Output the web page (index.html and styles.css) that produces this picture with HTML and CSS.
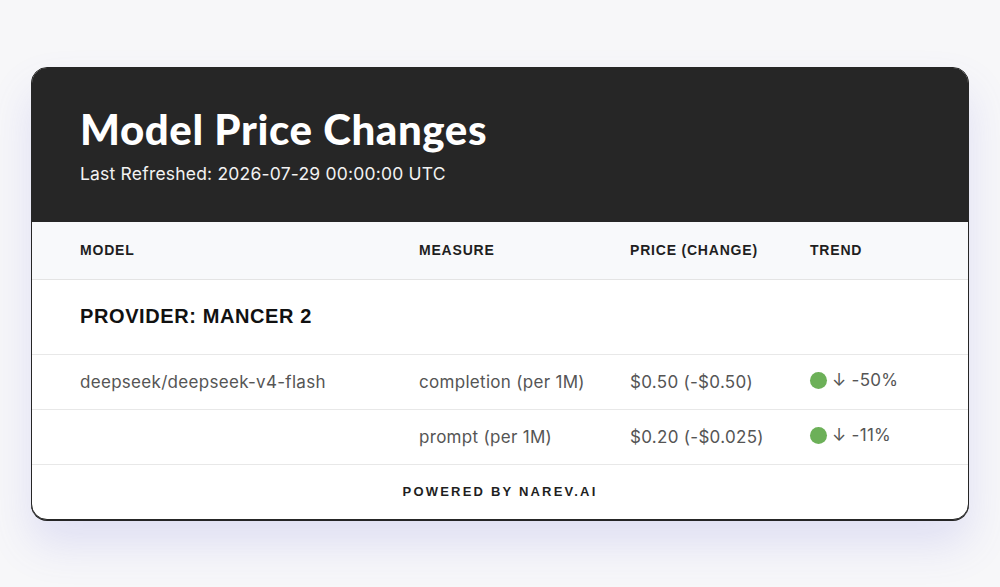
FILE: index.html
```html
<!DOCTYPE html>
<html lang="en">
<head>
    <meta charset="UTF-8">
    <meta name="viewport" content="width=device-width, initial-scale=1.0">
    <title>Model Price Changes</title>
    <link rel="stylesheet" href="styles.css">
</head>
<body>
    <div class="card">
        <header class="card-header">
            <h1 class="title">Model Price Changes</h1>
            <div class="refreshed">Last Refreshed: 2026-07-29 00:00:00 UTC</div>
        </header>

        <table class="prices">
            <colgroup>
                <col class="col-model">
                <col class="col-measure">
                <col class="col-price">
                <col>
            </colgroup>
            <thead>
                <tr>
                    <th>Model</th>
                    <th>Measure</th>
                    <th>Price (Change)</th>
                    <th>Trend</th>
                </tr>
            </thead>
            <tbody>
                <tr class="provider-row">
                    <td colspan="4">Provider: Mancer 2</td>
                </tr>
                <tr>
                    <td>deepseek/deepseek-v4-flash</td>
                    <td>completion (per 1M)</td>
                    <td>$0.50 (-$0.50)</td>
                    <td><span class="trend"><span class="dot"></span>↓ -50%</span></td>
                </tr>
                <tr>
                    <td></td>
                    <td>prompt (per 1M)</td>
                    <td>$0.20 (-$0.025)</td>
                    <td><span class="trend"><span class="dot"></span>↓ -11%</span></td>
                </tr>
            </tbody>
        </table>

        <footer class="card-footer">Powered by Narev.ai</footer>
    </div>
</body>
</html>
```

FILE: styles.css
```css
* {
    margin: 0;
    padding: 0;
    box-sizing: border-box;
}

html {
    background: #f7f7f9;
}

body {
    font-family: 'Inter', 'Liberation Sans', sans-serif;
    min-height: 100vh;
    padding: 67px 31px 0;
}

.card {
    background: #ffffff;
    border: 1px solid #262626;
    border-radius: 16px;
    overflow: hidden;
    box-shadow: 0 1px 0 #262626, 0 24px 44px rgba(100, 100, 220, 0.16);
}

.card-header {
    background: #262626;
    color: #ffffff;
    padding: 37px 48px 0;
    height: 154px;
}

.title {
    font-family: 'Lato', sans-serif;
    font-weight: 900;
    font-size: 42px;
    line-height: 48px;
    letter-spacing: 0.6px;
}

.refreshed {
    font-size: 17.5px;
    letter-spacing: 0.2px;
    margin-top: 10px;
    color: #f2f2f2;
}

.prices {
    width: 100%;
    border-collapse: collapse;
    table-layout: fixed;
}

.col-model {
    width: 387px;
}

.col-measure {
    width: 211px;
}

.col-price {
    width: 180px;
}

.prices th {
    background: #f8f9fb;
    font-family: 'Liberation Sans', Arial, sans-serif;
    font-weight: bold;
    font-size: 14px;
    letter-spacing: 0.8px;
    text-transform: uppercase;
    text-align: left;
    color: #1f1f1f;
    height: 57px;
    border-bottom: 1px solid #e4e4e4;
}

.prices th:first-child,
.prices td:first-child {
    padding-left: 48px;
}

.prices td {
    height: 55px;
    font-size: 17px;
    letter-spacing: 0.3px;
    color: #555555;
    border-bottom: 1px solid #e8e8e8;
}

.prices .provider-row td {
    height: 75px;
    font-family: 'Liberation Sans', Arial, sans-serif;
    font-weight: bold;
    font-size: 20px;
    letter-spacing: 0.6px;
    text-transform: uppercase;
    color: #111111;
}

.trend {
    display: inline-flex;
    align-items: center;
    gap: 5px;
}

.dot {
    width: 17px;
    height: 17px;
    border-radius: 50%;
    background: #6cb058;
}

.card-footer {
    height: 54px;
    display: flex;
    align-items: center;
    justify-content: center;
    font-family: 'Liberation Sans', Arial, sans-serif;
    font-weight: bold;
    font-size: 13px;
    letter-spacing: 2.2px;
    text-transform: uppercase;
    color: #1f1f1f;
}
```
